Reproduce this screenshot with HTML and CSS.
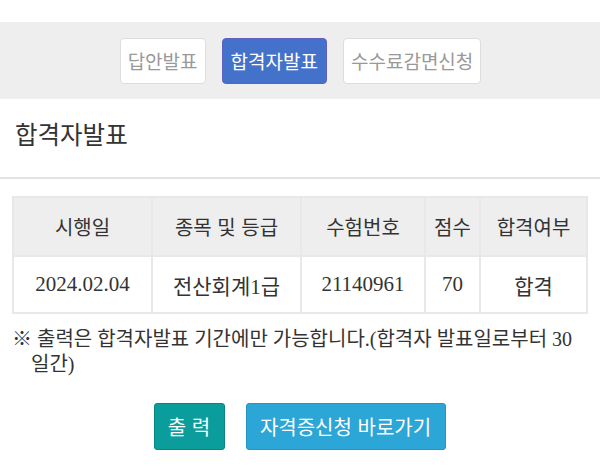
FILE: index.html
```html
<!DOCTYPE html>
<html lang="ko">
<head>
<meta charset="utf-8">
<link rel="stylesheet" href="styles.css">
</head>
<body>
<div class="tabs">
  <a class="tab">답안발표</a>
  <a class="tab active">합격자발표</a>
  <a class="tab">수수료감면신청</a>
</div>
<h2 class="title">합격자발표</h2>
<div class="content">
  <table class="result">
    <colgroup>
      <col style="width:139px"><col style="width:149px"><col style="width:124px"><col style="width:55px"><col>
    </colgroup>
    <thead>
      <tr><th>시행일</th><th>종목 및 등급</th><th>수험번호</th><th>점수</th><th>합격여부</th></tr>
    </thead>
    <tbody>
      <tr><td>2024.02.04</td><td>전산회계1급</td><td>21140961</td><td>70</td><td>합격</td></tr>
    </tbody>
  </table>
  <p class="notice">※ 출력은 합격자발표 기간에만 가능합니다.(합격자 발표일로부터 30일간)</p>
  <div class="actions">
    <a class="btn btn-print">출 력</a>
    <a class="btn btn-go">자격증신청 바로가기</a>
  </div>
</div>
</body>
</html>
```
FILE: styles.css
```css
html, body { margin: 0; padding: 0; background: #fff; }
body { font-family: "Liberation Serif", "Noto Sans CJK KR", serif; color: #333; }
.tabs {
  margin-top: 22px;
  height: 77px;
  background: #eeeeee;
  display: flex;
  justify-content: center;
  align-items: center;
  gap: 16px;
  padding-left: 1px;
  box-sizing: border-box;
}
.tab {
  font-family: "Noto Sans CJK KR", sans-serif;
  font-size: 19px;
  height: 46px;
  line-height: 44px;
  box-sizing: border-box;
  padding: 0 7px;
  background: #fff;
  color: #999;
  border: 1px solid #dddddd;
  border-radius: 4px;
}
.tab.active {
  background: #4472ca;
  color: #fff;
  border-color: #6060c0;
  padding: 0 8px;
}
.title {
  font-family: "Noto Sans CJK KR", sans-serif;
  font-weight: normal;
  font-size: 24.5px;
  color: #333;
  margin: 0;
  padding: 15px 15px 0;
  height: 63px;
  border-bottom: 2px solid #e3e3e3;
  line-height: 40px;
}
.content { padding: 17px 12px 0; }
.result {
  width: 576px;
  border-collapse: collapse;
  table-layout: fixed;
  font-size: 21px;
}
.result th, .result td {
  border: 2px solid #e8e8e8;
  text-align: center;
  font-weight: normal;
  color: #333;
  padding: 0;
}
.result th { background: #eeeeee; height: 57px; font-family: "Noto Sans CJK KR", sans-serif; font-size: 20px; }
.result td { height: 55px; }
.notice {
  margin: 13px 0 0;
  font-size: 20px;
  line-height: 25px;
  padding-left: 19px;
  text-indent: -19px;
  color: #333;
}
.actions {
  display: flex;
  justify-content: center;
  gap: 21px;
  margin-top: 26px;
  padding-right: 1px;
}
.btn {
  font-family: "Noto Sans CJK KR", sans-serif;
  font-size: 20px;
  color: #fff;
  height: 47px;
  line-height: 45px;
  box-sizing: border-box;
  border-radius: 3px;
  text-align: center;
}
.btn-print { width: 71px; background: #0b9d9b; border: 1px solid #0a8585; }
.btn-go { width: 200px; background: #2ba6d6; border: 1px solid #2596c3; }
```
